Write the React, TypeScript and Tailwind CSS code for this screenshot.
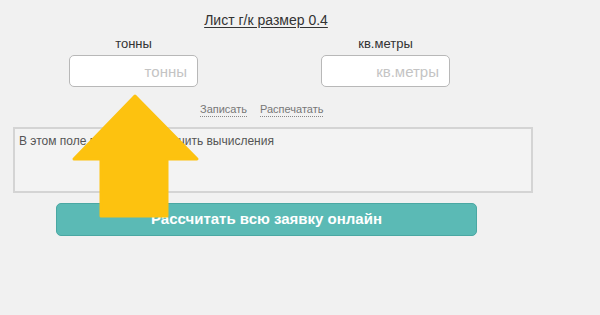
import React from "react";

export default function App() {
  const font = { fontFamily: '"Liberation Sans", Arial, sans-serif' };
  return (
    <div className="relative w-[600px] h-[315px] overflow-hidden bg-[#f1f1f1]" style={font}>
      <div className="ml-[13px] w-[520px] pt-[12px]">
        <div className="w-[506px] text-center text-[14px] leading-[16px] text-[#333] underline underline-offset-2">
          Лист г/к размер 0.4
        </div>
        <div className="flex ml-[56px] gap-[123px] mt-[8px]">
          <div className="flex flex-col items-center w-[129px]">
            <div className="text-[13px] leading-[16px] text-[#333] font-normal">тонны</div>
            <input
              className="mt-[3px] w-[129px] h-[32px] rounded-[5px] border-[1.5px] border-[#b8b8b8] bg-white text-right pr-[10px] text-[15px] placeholder:text-[#c4c4c4] outline-none"
              placeholder="тонны"
            />
          </div>
          <div className="flex flex-col items-center w-[129px]">
            <div className="text-[13px] leading-[16px] text-[#333] font-normal">кв.метры</div>
            <input
              className="mt-[3px] w-[129px] h-[32px] rounded-[5px] border-[1.5px] border-[#b8b8b8] bg-white text-right pr-[10px] text-[15px] placeholder:text-[#c4c4c4] outline-none"
              placeholder="кв.метры"
            />
          </div>
        </div>
        <div className="flex ml-[187px] gap-[13px] mt-[15px] text-[11px] leading-[14px] text-[#777]">
          <span className="border-b border-dotted border-[#888]">Записать</span>
          <span className="border-b border-dotted border-[#888]">Распечатать</span>
        </div>
        <div className="mt-[10px] w-[520px] h-[66px] border-2 border-[#d4d4d4] bg-[#f3f3f3] px-[4px] pt-[5px] text-[12px] leading-[15px] text-[#555]">
          В этом поле вы можете получить вычисления
        </div>
        <div className="ml-[43px] mt-[10px] w-[421px] h-[33px] rounded-[5px] bg-[#5bbab5] border border-[#4aa8a3] flex items-center justify-center text-white text-[15px] font-bold">
          Рассчитать всю заявку онлайн
        </div>
      </div>
      <svg className="absolute left-0 top-0" width="600" height="315" viewBox="0 0 600 315">
        <polygon
          points="135,96 197,159 167,159 167,216 101,216 101,159 74,159"
          fill="#fdc20f"
          stroke="#fdc20f"
          strokeWidth="3"
          strokeLinejoin="round"
        />
      </svg>
    </div>
  );
}
